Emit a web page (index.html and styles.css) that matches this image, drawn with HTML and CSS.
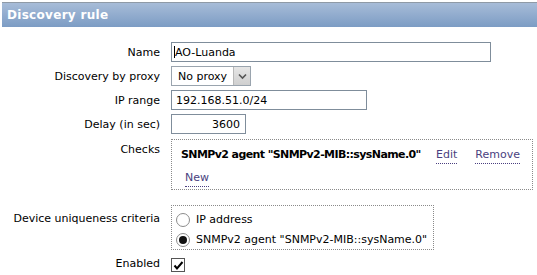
FILE: index.html
```html
<!DOCTYPE html>
<html>
<head>
<meta charset="utf-8">
<link rel="stylesheet" href="styles.css">
</head>
<body>
<div class="panel">
  <div class="header">Discovery rule</div>
  <div class="form">
    <div class="label">Name</div>
    <div class="value"><div class="input name-input"><span class="caret"></span>AO-Luanda</div></div>

    <div class="label">Discovery by proxy</div>
    <div class="value"><div class="select"><span class="select-text">No proxy</span><span class="select-btn"><svg width="9" height="7" viewBox="0 0 9 7"><path d="M1 1.5 L4.5 5 L8 1.5" fill="none" stroke="#555" stroke-width="1.6"/></svg></span></div></div>

    <div class="label">IP range</div>
    <div class="value"><div class="input ip-input">192.168.51.0/24</div></div>

    <div class="label">Delay (in sec)</div>
    <div class="value"><div class="input delay-input">3600</div></div>

    <div class="label label-top">Checks</div>
    <div class="value">
      <div class="box checks">
        <div class="check-row">
          <span class="check-name">SNMPv2 agent "SNMPv2-MIB::sysName.0"</span>
          <span class="link edit">Edit</span>
          <span class="link remove">Remove</span>
        </div>
        <div class="new-row"><span class="link">New</span></div>
      </div>
    </div>

    <div class="label label-top uniq-label">Device uniqueness criteria</div>
    <div class="value uniq-value">
      <div class="box uniq">
        <div class="radio-row"><span class="radio"></span>IP address</div>
        <div class="radio-row"><span class="radio on"></span>SNMPv2 agent "SNMPv2-MIB::sysName.0"</div>
      </div>
    </div>

    <div class="label">Enabled</div>
    <div class="value"><span class="checkbox"><svg width="11" height="11" viewBox="0 0 11 11"><path d="M1.5 5.5 L4 8.5 L9.5 2" fill="none" stroke="#000" stroke-width="2"/></svg></span></div>
  </div>
</div>
</body>
</html>
```

FILE: styles.css
```css
html, body {
  margin: 0;
  padding: 0;
  background: #ffffff;
}
body {
  padding: 2px 0 0 2px;
  font-family: "DejaVu Sans", Verdana, sans-serif;
  font-size: 11px;
  color: #000;
}
.header {
  height: 24px;
  border-top: 1px solid #8f9aa6;
  background: linear-gradient(#a7bcd8, #7c9cc4);
  color: #fff;
  font-weight: bold;
  font-size: 12px;
  letter-spacing: 0.3px;
  line-height: 24px;
  padding-left: 5px;
}
.form {
  display: grid;
  grid-template-columns: 158px 1fr;
  column-gap: 11px;
  row-gap: 4px;
  padding-top: 15px;
  align-items: center;
}
.label {
  text-align: right;
  color: #000;
  padding-top: 1px;
}
.label-top {
  align-self: start;
  padding-top: 5px;
}
.value {
  display: flex;
}
.input {
  box-sizing: border-box;
  height: 20px;
  border: 1px solid #7f8d9b;
  background: #fff;
  line-height: 19px;
  padding: 0 4px;
  white-space: nowrap;
}
.name-input {
  width: 320px;
  padding-left: 2px;
}
.caret {
  display: inline-block;
  width: 1px;
  height: 12px;
  background: #000;
  vertical-align: -2px;
}
.ip-input { width: 196px; }
.delay-input { width: 75px; text-align: right; padding-right: 5px; }
.select {
  box-sizing: border-box;
  height: 20px;
  width: 80px;
  border: 1px solid #9aa4ae;
  display: flex;
  background: #fff;
}
.select-text {
  flex: 1;
  line-height: 19px;
  padding-left: 6px;
}
.select-btn {
  width: 16px;
  background: linear-gradient(#e6e6e6, #cfcfcf);
  border-left: 1px solid #b8b8b8;
  display: flex;
  align-items: center;
  justify-content: center;
}
.box {
  box-sizing: border-box;
  border: 1px dotted #8a8a8a;
}
.checks {
  width: 362px;
  height: 51px;
  margin-top: 1px;
  padding: 8px 0 0 9px;
}
.check-row {
  display: flex;
  align-items: baseline;
  white-space: nowrap;
}
.check-name {
  font-weight: bold;
  letter-spacing: -0.6px;
  width: 255px;
}
.link {
  color: #4a3f80;
  border-bottom: 1px dotted #4a3f80;
  padding-bottom: 2px;
}
.remove { margin-left: 18px; }
.new-row {
  padding-left: 4px;
  margin-top: 7px;
}
.uniq-label { padding-top: 7px; margin-top: 11px; }
.uniq-value { margin-top: 11px; }
.uniq {
  width: 263px;
  height: 45px;
  padding: 4px 0 0 4px;
}
.radio-row {
  display: flex;
  align-items: center;
  height: 19px;
  margin-bottom: 1px;
}
.radio {
  box-sizing: border-box;
  width: 14px;
  height: 14px;
  border-radius: 50%;
  border: 1px solid #8c8c8c;
  background: #fff;
  margin-right: 6px;
  display: flex;
  align-items: center;
  justify-content: center;
}
.radio.on::after {
  content: "";
  width: 8px;
  height: 8px;
  border-radius: 50%;
  background: #111;
}
.checkbox {
  box-sizing: border-box;
  width: 14px;
  height: 14px;
  border: 1px solid #555;
  display: flex;
  align-items: center;
  justify-content: center;
  margin: 4px 0 0;
}
```
